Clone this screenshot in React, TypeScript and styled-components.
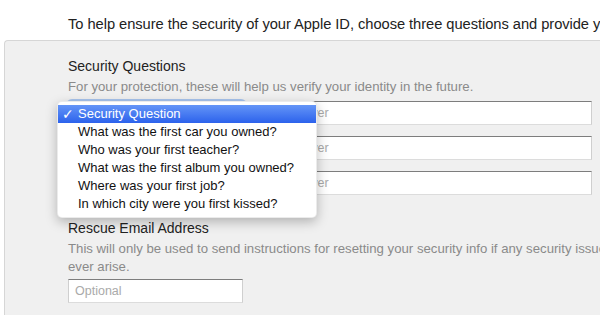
import styled, { createGlobalStyle } from "styled-components";

const questions = [
  "What was the first car you owned?",
  "Who was your first teacher?",
  "What was the first album you owned?",
  "Where was your first job?",
  "In which city were you first kissed?",
];

export default function App() {
  return (
    <>
      <GlobalStyle />
      <Page>
        <Intro>
          To help ensure the security of your Apple ID, choose three questions
          and provide your answers below.
        </Intro>

        <Panel>
          <Section>
            <Heading>Security Questions</Heading>
            <Description>
              For your protection, these will help us verify your identity in
              the future.
            </Description>

            <QuestionList>
              {[0, 1, 2].map((i) => (
                <QuestionRow key={i}>
                  <SelectBox $focused={i === 0} />
                  <AnswerInput placeholder="Answer" />
                </QuestionRow>
              ))}
            </QuestionList>
          </Section>

          <Section>
            <Heading>Rescue Email Address</Heading>
            <Description $tight>
              This will only be used to send instructions for resetting your
              security info if any security issues ever arise.
            </Description>
            <EmailInput placeholder="Optional" />
          </Section>
        </Panel>

        <Menu>
          <MenuItem $selected>
            <Check>✓</Check>
            Security Question
          </MenuItem>
          {questions.map((q) => (
            <MenuItem key={q}>{q}</MenuItem>
          ))}
        </Menu>
      </Page>
    </>
  );
}

const GlobalStyle = createGlobalStyle`
  html, body {
    margin: 0;
    background: #fff;
    overflow: hidden;
  }

  body {
    font-family: "Liberation Sans", Arial, sans-serif;
    color: #333;
  }
`;

const Page = styled.div`
  position: relative;
  width: 720px;
  height: 315px;
`;

const Intro = styled.div`
  height: 40px;
  box-sizing: border-box;
  padding: 15px 0 0 68px;

  white-space: nowrap;
  font-size: 14.7px;
  letter-spacing: -0.05px;
  line-height: 18px;
  color: #222;
`;

const Panel = styled.div`
  margin-left: 4px;
  padding: 16px 0 40px 63px;

  background: #f0f0f0;
  border-top: 1px solid #d6d6d6;
  border-left: 1px solid #d6d6d6;
  border-top-left-radius: 4px;
`;

const Section = styled.div`
  & + & {
    margin-top: 24px;
  }
`;

const Heading = styled.h3`
  margin: 0;
  font-size: 14px;
  font-weight: normal;
  line-height: 18px;
  color: #222;
`;

const Description = styled.p<{ $tight?: boolean }>`
  width: 555px;
  margin: 3px 0 ${(p) => (p.$tight ? "3px" : "5px")};

  font-size: 13.2px;
  line-height: 18px;
  color: #8a8a8a;
`;

const QuestionList = styled.div`
  display: flex;
  flex-direction: column;
  gap: 11px;
`;

const QuestionRow = styled.div`
  display: flex;
  align-items: center;
  gap: 35px;
`;

const SelectBox = styled.div<{ $focused?: boolean }>`
  width: 175px;
  height: 22px;

  background: #fff;
  border: 1px solid #b5b5b5;
  border-radius: 4px;
  box-shadow: ${(p) =>
    p.$focused ? "0 0 0 2px rgba(110, 160, 235, 0.55)" : "none"};
`;

const fieldStyle = `
  box-sizing: border-box;
  height: 24px;
  padding: 0 6px;

  background: #fff;
  border: 1px solid #cfcfcf;
  border-top-color: #7d7d7d;
  border-bottom-color: #dcdcdc;
  border-radius: 0;
  outline: none;

  font-family: "Liberation Sans", Arial, sans-serif;
  font-size: 12.5px;
  color: #333;

  &::placeholder {
    color: #aaa;
  }
`;

const AnswerInput = styled.input`
  ${fieldStyle}
  width: 312px;
`;

const EmailInput = styled.input`
  ${fieldStyle}
  width: 175px;
`;

const Menu = styled.div`
  position: absolute;
  left: 57px;
  top: 101px;
  width: 260px;
  box-sizing: border-box;
  padding: 3px 0 4px;

  background: #fff;
  border: 1px solid rgba(0, 0, 0, 0.08);
  border-radius: 5px;
  box-shadow: 0 4px 12px rgba(0, 0, 0, 0.26);
`;

const MenuItem = styled.div<{ $selected?: boolean }>`
  position: relative;
  height: 18px;
  padding-left: 20px;

  font-size: 13px;
  line-height: 18px;
  white-space: nowrap;
  color: ${(p) => (p.$selected ? "#fff" : "#111")};
  background: ${(p) =>
    p.$selected ? "linear-gradient(#6495f7, #2c62ec)" : "transparent"};
`;

const Check = styled.span`
  position: absolute;
  left: 4px;
  top: 0;
  font-family: "DejaVu Sans", sans-serif;
  font-size: 14px;
  font-weight: bold;
`;
